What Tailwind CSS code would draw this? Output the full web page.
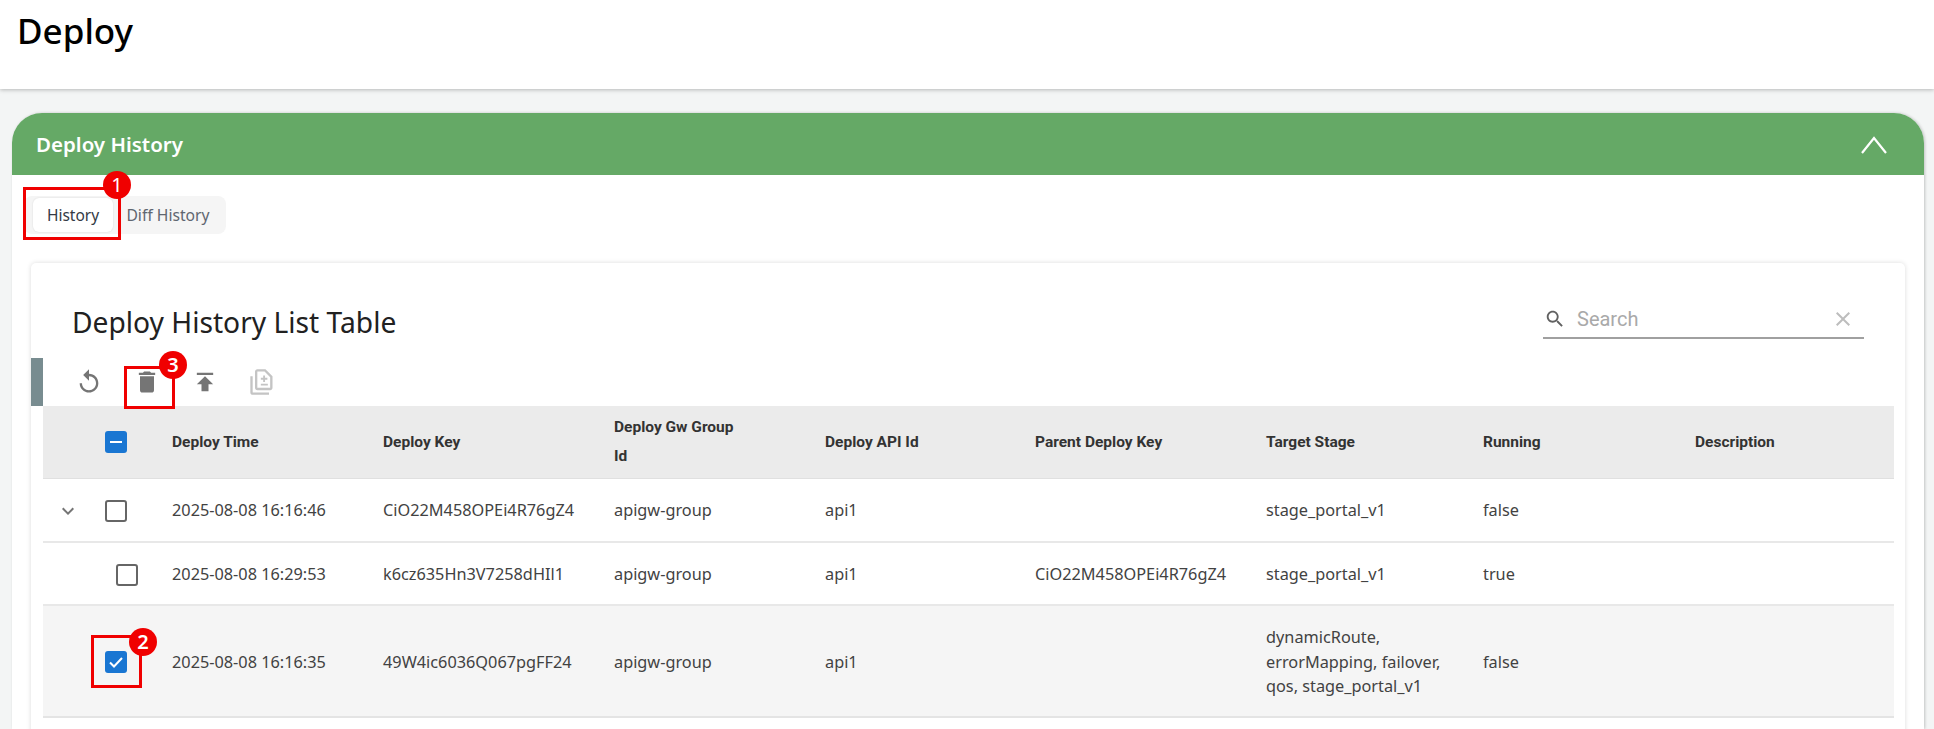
<!DOCTYPE html>
<html lang="en">
  <head>
    <meta charset="UTF-8" />
    <title>Deploy</title>
    <script src="https://cdn.jsdelivr.net/npm/@tailwindcss/browser@4"></script>
  </head>
  <body class="relative h-[729px] overflow-hidden bg-[#f3f5f5] font-['Noto_Sans',sans-serif] text-[#212121]">
    <!-- page title -->
    <header class="relative z-10 h-[89px] bg-white pl-[17px] shadow-[0_1px_4px_rgba(0,0,0,0.25)]">
      <h1 class="pt-[7px] text-[35px] leading-[48px] font-medium text-black">Deploy</h1>
    </header>

    <section class="mt-[24px] mr-[10px] ml-[12px] h-[616px] rounded-t-[30px] bg-white shadow-[1px_0_3px_rgba(0,0,0,0.2)]">
      <div class="flex h-[62px] items-center justify-between rounded-t-[30px] bg-[#65a966] pr-[36px] pl-[24px] text-white">
        <h2 class="pt-[1px] text-[20.5px] font-semibold">Deploy History</h2>
        <svg class="mt-[2px] h-[20px] w-[28px]" viewBox="0 0 28 20" fill="none" stroke="white" stroke-width="2.2"><path d="M2 18 14 3l12 15" /></svg>
      </div>

      <!-- tabs -->
      <div class="px-[12px] pt-[21px]">
        <div class="flex h-[38px] w-[202px] items-center rounded-[8px] bg-[#f5f5f5] pl-[9px] text-[15.5px]">
          <div class="flex h-[34px] w-[80px] items-center justify-center rounded-[6px] bg-white pt-[2px] text-[#333a45] shadow-[0_0_2px_rgba(0,0,0,0.12)]">History</div>
          <div class="flex h-[34px] flex-1 items-center justify-center pt-[2px] pr-[3px] text-[15.7px] text-[#5f6670]">Diff History</div>
        </div>
      </div>

      <!-- table card -->
      <div class="mt-[29px] mr-[19px] ml-[19px] h-[500px] rounded-t-[5px] bg-white shadow-[0_0_5px_rgba(0,0,0,0.14)]">
        <div class="flex h-[95px] items-start justify-between pt-[38px] pr-[41px] pl-[41px]">
          <h3 class="text-[28.2px] leading-[42px] text-[#212121]">Deploy History List Table</h3>
          <div class="-mt-[1px] flex h-[39px] w-[321px] items-center border-b-2 border-[#a0a0a0] pr-[9px] pl-[1px]">
            <svg class="h-[22px] w-[22px] text-[#616161]" viewBox="0 0 24 24" fill="currentColor"><path d="M15.5 14h-.79l-.28-.27C15.41 12.59 16 11.11 16 9.5 16 5.91 13.09 3 9.5 3S3 5.91 3 9.5 5.91 16 9.5 16c1.61 0 3.09-.59 4.23-1.57l.27.28v.79l5 4.99L20.49 19l-4.99-5zm-6 0C7.01 14 5 11.99 5 9.5S7.01 5 9.5 5 14 7.01 14 9.5 11.99 14 9.5 14z" /></svg>
            <span class="ml-[11px] flex-1 font-['Roboto',sans-serif] text-[20px] text-[#a9a9a9]">Search</span>
            <svg class="h-[24px] w-[24px] text-[#bdbdbd]" viewBox="0 0 24 24" fill="currentColor"><path d="M19 6.41 17.59 5 12 10.59 6.41 5 5 6.41 10.59 12 5 17.59 6.41 19 12 13.41 17.59 19 19 17.59 13.41 12z" /></svg>
          </div>
        </div>

        <!-- toolbar -->
        <div class="flex h-[48px]">
          <div class="h-full w-[12px] bg-[#788c90]"></div>
          <div class="flex items-center gap-[30px] pl-[32px] text-[#757575]">
            <svg class="h-[28px] w-[28px]" viewBox="0 0 24 24" fill="currentColor"><path d="M12 5V1L7 6l5 5V7c3.31 0 6 2.69 6 6s-2.69 6-6 6-6-2.69-6-6H4c0 4.42 3.58 8 8 8s8-3.58 8-8-3.58-8-8-8z" /></svg>
            <svg class="h-[28px] w-[28px]" viewBox="0 0 24 24" fill="currentColor"><path d="M6 19c0 1.1.9 2 2 2h8c1.1 0 2-.9 2-2V7H6v12zM19 4h-3.5l-1-1h-5l-1 1H5v2h14V4z" /></svg>
            <svg class="h-[28px] w-[28px]" viewBox="0 0 24 24" fill="currentColor"><path d="M5 4v2h14V4H5zm0 10h4v6h6v-6h4l-7-7-7 7z" /></svg>
            <svg class="-ml-[1px] h-[28px] w-[28px] text-[#c4c4c4]" viewBox="0 0 24 24" fill="currentColor"><path d="M18 23H4c-1.1 0-2-.9-2-2V7h2v14h14v2zM15 1H8c-1.1 0-1.99.9-1.99 2L6 17c0 1.1.89 2 1.99 2H19c1.1 0 2-.9 2-2V7l-6-6zm4 16H8V3h6.17L19 7.83V17zm-8-2h6v-1.6h-6V15zm2-3h1.6v-2h2V8.4h-2v-2H13v2h-2V10h2v2z" /></svg>
          </div>
        </div>

        <!-- table -->
        <div class="ml-[12px] w-[1851px] text-[16.3px] text-[#424242]">
          <div class="grid h-[73px] grid-cols-[129px_211px_231px_211px_210px_231px_217px_212px_1fr] items-center border-b border-[#e0e0e0] bg-[#ebebeb] font-['Roboto',sans-serif] text-[15.5px] leading-[29px] font-bold text-[#333]">
            <div class="pl-[62px]">
              <span class="flex h-[22px] w-[22px] items-center justify-center rounded-[3px] bg-[#1976d2]"><span class="h-[2.5px] w-[12px] bg-white"></span></span>
            </div>
            <div>Deploy Time</div>
            <div>Deploy Key</div>
            <div class="w-[130px]">Deploy Gw Group Id</div>
            <div>Deploy API Id</div>
            <div>Parent Deploy Key</div>
            <div>Target Stage</div>
            <div>Running</div>
            <div>Description</div>
          </div>

          <div class="grid h-[64px] grid-cols-[129px_211px_231px_211px_210px_231px_217px_212px_1fr] items-center border-b-2 border-[#e8e8e8] pt-[1px]">
            <div class="flex items-center pl-[13px]">
              <svg class="h-[24px] w-[24px] text-[#757575]" viewBox="0 0 24 24" fill="currentColor"><path d="M16.59 8.59 12 13.17 7.41 8.59 6 10l6 6 6-6z" /></svg>
              <span class="ml-[25px] h-[22px] w-[22px] rounded-[3px] border-2 border-[#666]"></span>
            </div>
            <div>2025-08-08 16:16:46</div>
            <div>CiO22M458OPEi4R76gZ4</div>
            <div>apigw-group</div>
            <div>api1</div>
            <div></div>
            <div>stage_portal_v1</div>
            <div>false</div>
            <div></div>
          </div>

          <div class="grid h-[63px] grid-cols-[129px_211px_231px_211px_210px_231px_217px_212px_1fr] items-center border-b-2 border-[#e8e8e8] pt-[2px]">
            <div class="pl-[73px]">
              <span class="block h-[22px] w-[22px] rounded-[3px] border-2 border-[#666]"></span>
            </div>
            <div>2025-08-08 16:29:53</div>
            <div>k6cz635Hn3V7258dHIl1</div>
            <div>apigw-group</div>
            <div>api1</div>
            <div>CiO22M458OPEi4R76gZ4</div>
            <div>stage_portal_v1</div>
            <div>true</div>
            <div></div>
          </div>

          <div class="grid h-[112px] grid-cols-[129px_211px_231px_211px_210px_231px_217px_212px_1fr] items-center border-b-2 border-[#e4e4e4] bg-[#f5f5f5] pt-[2px]">
            <div class="pl-[62px]">
              <span class="flex h-[22px] w-[22px] items-center justify-center rounded-[3px] bg-[#1976d2]">
                <svg class="h-[18px] w-[18px]" viewBox="0 0 18 18" fill="none" stroke="white" stroke-width="2"><path d="m3 9.5 4 4 8-8.5" /></svg>
              </span>
            </div>
            <div>2025-08-08 16:16:35</div>
            <div>49W4ic6036Q067pgFF24</div>
            <div>apigw-group</div>
            <div>api1</div>
            <div></div>
            <div class="w-[175px] leading-[24.5px]">dynamicRoute, errorMapping, failover, qos, stage_portal_v1</div>
            <div>false</div>
            <div></div>
          </div>
        </div>
      </div>
    </section>

    <!-- numbered callouts laid over the screenshot -->
    <div class="absolute top-[187px] left-[23px] h-[53px] w-[98px] border-[3px] border-[#f00000]"></div>
    <div class="absolute top-[171px] left-[103px] flex h-[28px] w-[28px] items-center justify-center rounded-full bg-[#f00000] text-[20px] text-white">1</div>
    <div class="absolute top-[635px] left-[91px] h-[53px] w-[51px] border-[3px] border-[#f00000]"></div>
    <div class="absolute top-[628px] left-[129px] flex h-[28px] w-[28px] items-center justify-center rounded-full bg-[#f00000] text-[20px] font-semibold text-white">2</div>
    <div class="absolute top-[366px] left-[124px] h-[43px] w-[51px] border-[3px] border-[#f00000]"></div>
    <div class="absolute top-[351px] left-[159px] flex h-[28px] w-[28px] items-center justify-center rounded-full bg-[#f00000] text-[20px] font-semibold text-white">3</div>
  </body>
</html>
